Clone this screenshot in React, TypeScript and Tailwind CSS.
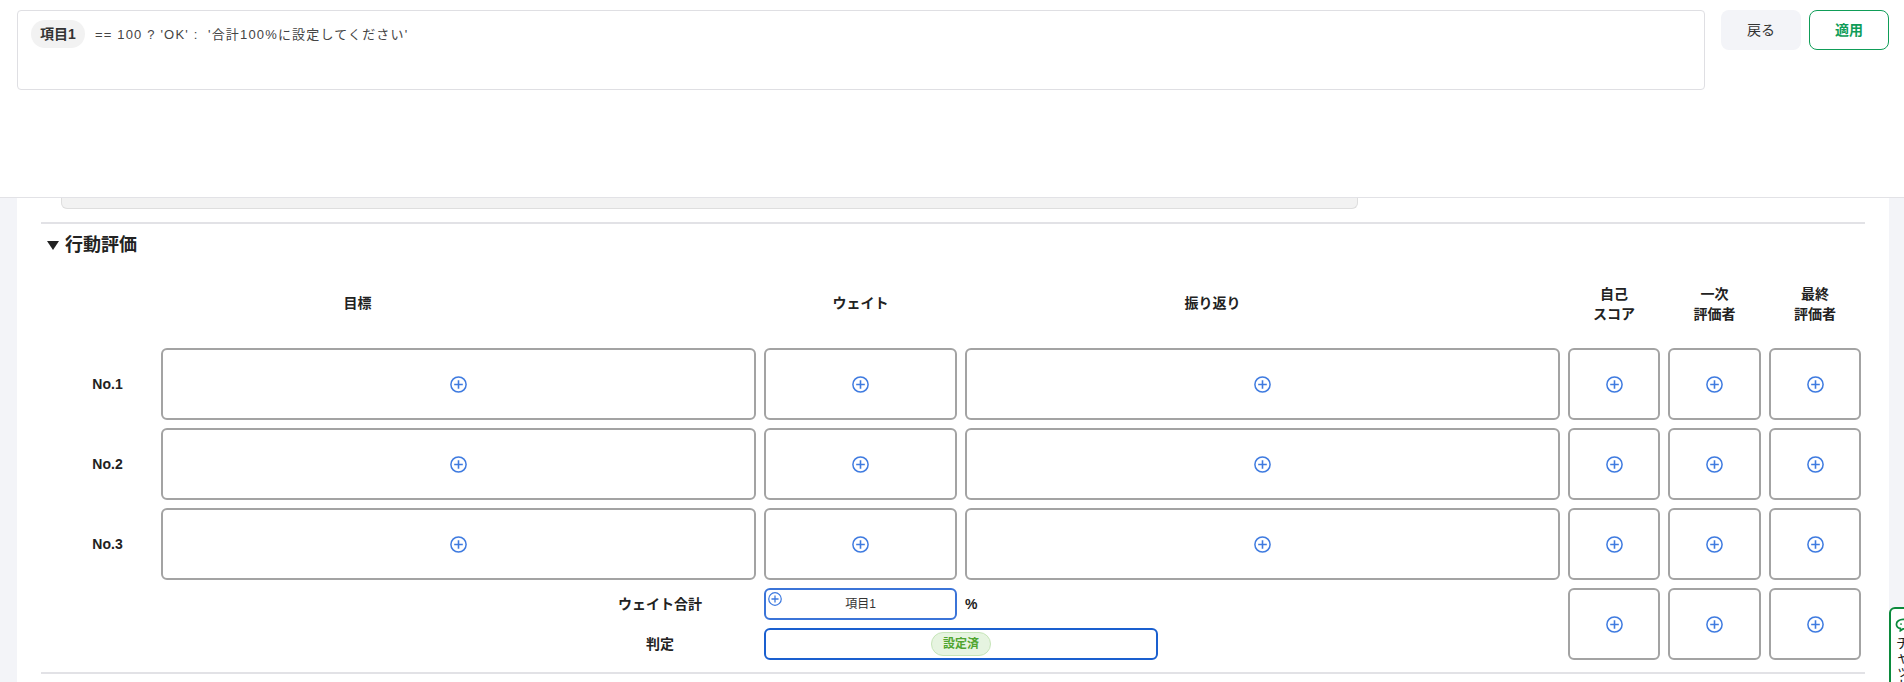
const stack = "font-['Liberation_Sans','Noto_Sans_CJK_JP',sans-serif]"

function PlusIcon({ small }: { small?: boolean }) {
  return (
    <svg viewBox="0 0 17 17" fill="none" stroke="#3f7be0" className={small ? 'h-[14px] w-[14px]' : 'h-[17px] w-[17px]'}>
      <circle cx="8.5" cy="8.5" r="7.6" strokeWidth="1.5" />
      <path d="M8.5 4.2v8.6M4.2 8.5h8.6" strokeWidth="1.6" />
    </svg>
  )
}

function Cell() {
  return (
    <div className="flex h-[72px] items-center justify-center rounded-[6px] border-2 border-[#a3a3a3] bg-white">
      <PlusIcon />
    </div>
  )
}

function Row({ label }: { label: string }) {
  return (
    <>
      <div className="flex items-center justify-center pl-[21px] text-[14px] font-bold text-[#222]">{label}</div>
      {[0, 1, 2, 3, 4, 5].map((i) => (
        <Cell key={i} />
      ))}
    </>
  )
}

function Head({ lines, className = '' }: { lines: string[]; className?: string }) {
  return (
    <div
      className={`flex h-[74px] flex-col items-center justify-center text-center text-[14px] font-bold leading-[20px] text-[#222] ${className}`}
    >
      {lines.map((l) => (
        <span key={l}>{l}</span>
      ))}
    </div>
  )
}

export default function App() {
  return (
    <div className={`relative h-[682px] w-[1904px] overflow-hidden bg-[#f3f4f8] ${stack}`}>
      {/* fixed editor bar */}
      <div className="flex h-[198px] items-start gap-4 border-b border-[#e2e2e6] bg-white pl-[17px] pt-[10px]">
        <div className="flex h-[80px] w-[1688px] items-start rounded-[4px] border border-[#dfdfe3] bg-white pl-[13px] pt-[9px]">
          <span className="flex h-[28px] w-[54px] items-center justify-center rounded-full bg-[#f2f2f2] text-[14px] font-bold text-[#333]">
            項目1
          </span>
          <span className="ml-[10px] mt-[6px] whitespace-pre text-[13px] leading-[18px] tracking-[0.09em] text-[#444]">
            {"== 100 ? 'OK' :  '合計100%に設定してください'"}
          </span>
        </div>
        <div className="flex gap-2">
          <button className="h-[40px] w-[80px] rounded-lg bg-[#f3f4f8] text-[14px] text-[#333]">戻る</button>
          <button className="h-[40px] w-[80px] rounded-lg border border-[#0f9d58] bg-white text-[14px] font-bold text-[#0f9d58]">
            適用
          </button>
        </div>
      </div>

      {/* card */}
      <div className="ml-[17px] h-[484px] w-[1872px] bg-white px-[24px]">
        <div className="ml-[20px] h-[11px] w-[1297px] rounded-b-[6px] border border-t-0 border-[#dedede] bg-[#f2f2f2]" />
        <div className="mt-[13px] h-[2px] bg-[#e2e2e6]" />
        <div className="mb-[9px] mt-[9px] flex h-[24px] items-center pl-[6px] text-[18px] font-bold text-[#222]">
          <svg viewBox="0 0 12 9" className="mr-[6px] h-[9px] w-[12px]" fill="#222">
            <path d="M0 0h12L6 9z" />
          </svg>
          行動評価
        </div>

        <div className="grid grid-cols-[112px_595px_193px_595px_92px_93px_92px] gap-x-[8px] gap-y-[8px]">
          <div />
          <Head lines={['目標']} className="pr-[202px]" />
          <Head lines={['ウェイト']} />
          <Head lines={['振り返り']} className="pr-[100px]" />
          <Head lines={['自己', 'スコア']} className="pt-[2px]" />
          <Head lines={['一次', '評価者']} className="pt-[2px]" />
          <Head lines={['最終', '評価者']} className="pt-[2px]" />

          <Row label="No.1" />
          <Row label="No.2" />
          <Row label="No.3" />

          <div className="col-span-4 flex flex-col gap-[8px] text-[14px] text-[#222]">
            <div className="flex items-center">
              <div className="ml-[524px] w-[190px] text-center font-bold">ウェイト合計</div>
              <div className="relative ml-[9px] flex h-[32px] w-[193px] items-center justify-center rounded-[6px] border-2 border-[#3b74d8] text-[12px] text-[#333]">
                <span className="absolute left-[2px] top-[2px] flex">
                  <PlusIcon small />
                </span>
                項目1
              </div>
              <span className="ml-[8px] font-bold">%</span>
            </div>
            <div className="flex items-center">
              <div className="ml-[524px] w-[190px] text-center font-bold">判定</div>
              <div className="ml-[9px] flex h-[32px] w-[394px] items-center justify-center rounded-[6px] border-2 border-[#1a5fcf]">
                <span className="flex h-[24px] w-[60px] items-center justify-center rounded-full border border-[#c6e5b8] bg-[#e6f4e0] text-[12px] font-bold text-[#4fa52f]">
                  設定済
                </span>
              </div>
            </div>
          </div>
          <Cell />
          <Cell />
          <Cell />
        </div>

        <div className="mt-[12px] h-[2px] bg-[#e2e2e6]" />
      </div>

      {/* chat launcher, cut off by the window edge */}
      <div className="absolute left-[1889px] top-[607px] h-[100px] w-[60px] rounded-tl-[6px] border-2 border-[#0b8a3c] bg-white pl-[4px] pt-[9px] text-[14px] leading-[14px] text-[#222]">
        <svg viewBox="0 0 18 16" className="h-[14px] w-[16px]" fill="none" stroke="#0b8a3c" strokeWidth="2">
          <path d="M9 1.5c4 0 7.5 2.3 7.5 5.5s-3.5 5.5-7.5 5.5l-3 2v-2.6C3 11.2 1.5 9.3 1.5 7 1.5 3.8 5 1.5 9 1.5z" />
          <path d="M6 7h1.5M10.5 7H12" />
        </svg>
        <div className="mt-[4px] flex w-[16px] flex-col items-center">
          <span>チ</span>
          <span>ャ</span>
          <span>ッ</span>
          <span>ト</span>
        </div>
      </div>
    </div>
  )
}
